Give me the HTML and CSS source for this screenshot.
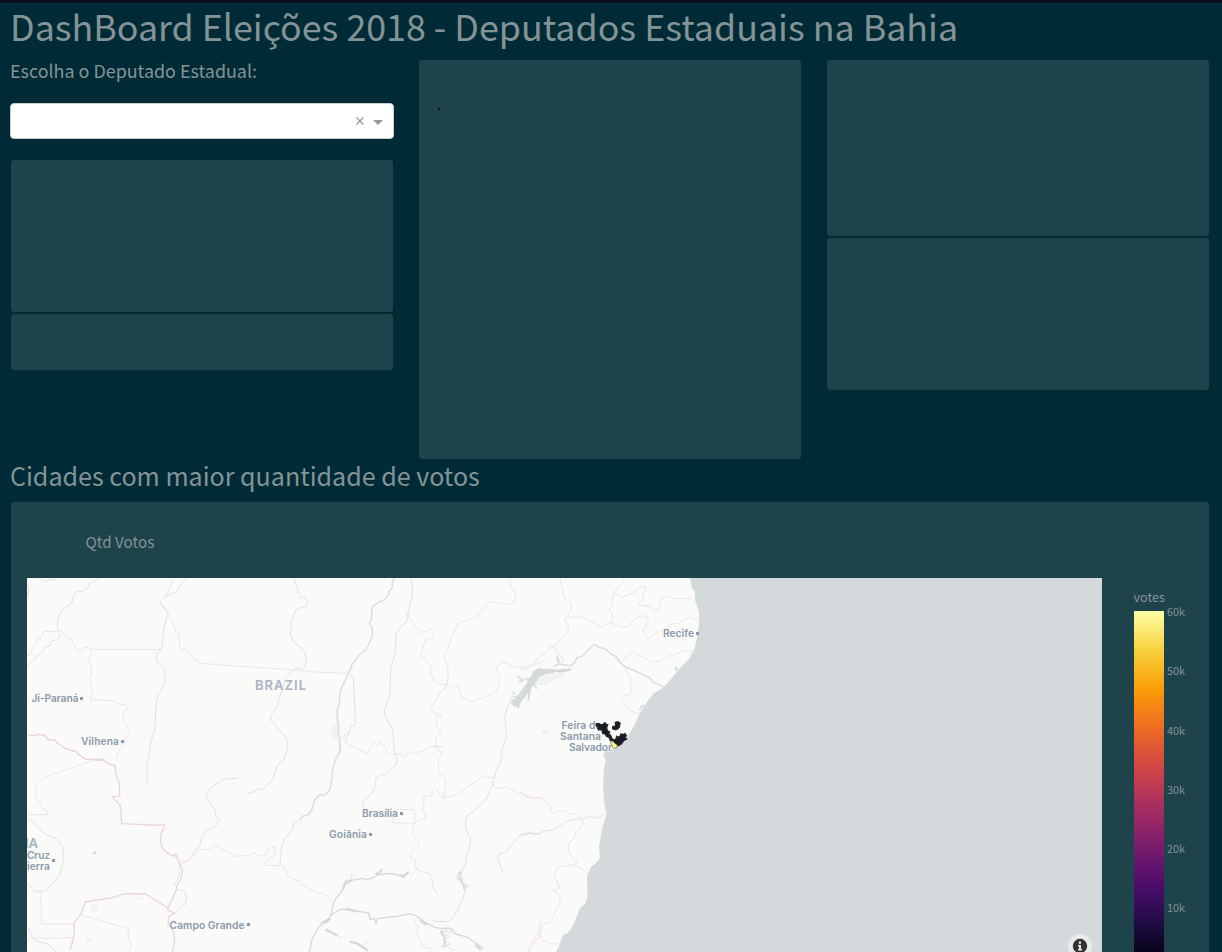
FILE: index.html
```html
<!DOCTYPE html>
<html lang="pt-BR">
<head>
<meta charset="utf-8">
<title>DashBoard Eleições 2018</title>
<link rel="stylesheet" href="styles.css">
</head>
<body>
<main class="page">
  <h1 class="title"><span>DashBoard Eleições 2018 - Deputados Estaduais na Bahia</span></h1>
  <section class="columns">
    <div class="column">
      <label class="picker-label"><span>Escolha o Deputado Estadual:</span></label>
      <div class="select">
        <svg class="select-icons" width="30" height="12" viewBox="0 0 30 12"><path d="M1.500 2.500l6.800 7M8.300 2.500L1.500 9.500" stroke="#999" stroke-width="1.200" fill="none"/><path d="M18 5h10l-5 5z" fill="#999"/></svg>
      </div>
      <div class="card card-candidate"></div>
      <div class="card card-summary"></div>
    </div>
    <div class="column"><div class="card card-photo"><i class="dot"></i></div></div>
    <div class="column">
      <div class="card card-party"></div>
      <div class="card card-total"></div>
    </div>
  </section>
  <h2 class="subtitle"><span>Cidades com maior quantidade de votos</span></h2>
  <section class="card map-card">
    <div class="chart-title"><span>Qtd Votos</span></div>
    <div class="chart">
      <svg class="map" width="1075" height="374" viewBox="27 578 1075 374">
        <rect x="27" y="578" width="1075" height="374" fill="#d4dadc"/>
        <path fill="#fafaf8" d="M27 578H690L692 588 695 592 695 600 699 612 699 624 697 638 694 650 689 659 680 668 671 679 663 688 654 693 647 702 640 713 634 726 627 737 621 745 614 749 606 750 603 756 606 760 604 768 603 786 604 802 606.500 814 602 829 599 847 600 858 596 863 591 867 587 876 587.500 897 585 904 580 908 576 918 574 924 568 933 563 935 559 946 556 952H27z"/>
        <g class="shade">
          <path d="M152 283l1-7 4 3v27l-4-2zM93 490l9-34 7 10 4 44-14-5z" transform="translate(300 570) scale(.33333)"/>
          <path d="M45 328l26-12 32-4 27-7-4 16-28 9-18 15-32-1zM62 476l20 4 7 16-23-4z" transform="translate(520 570) scale(.33333)"/>
          <path d="M212 436l17-5 6 16-22 10zM198 536l13-6 4 14-12 5zM346 412l27 2-6 6-19-2z" transform="translate(20 760) scale(.33333)"/>
        </g>
        <g class="river">
          <g transform="translate(20 570) scale(.33333)">
            <path d="M55 24l18 10 28-7 12 4M22 42l5 20-4 22M238 24l-29 16-9 19-12 3-3 3-16-2-10 18-3 17-19 15-8 5-15 28-2 28 9 27-9 8-19 6-4 14-12 2-16 22-8 2-10 14-23 20M502 24l-16 12-15 30-19 7-20 10M446 136l-5-14-20-24M442 136l-5 20-6 20-2 34-2 20-6 10-8 8-4 12 2 16 14 12 9 10 2 30-8 26-14 18-4 20-3 26-2 58-13 40-3 27-4 28M820 24l12 24 2 18 8 10M842 112l-14 8-14 32-3 38 10 28 20 13M840 293l-16 2-11 10-16 20-10 37-11 24-2 23-20 25-2 16 26 30 18 22 8 18-3 22-14 38"/>
          </g>
          <g transform="translate(20 760) scale(.33333)">
            <path d="M382 0l-1 68M786 0l-14 18-13 39-30 31-12-1-18 10-15 3M652 55l-38 2-40 25-13 15-5 13 14 14 4 12 14 18-2 13 11 14-8 15-28 15-15 20-7 28-15 16-10 18-15 12-18 5-4 36-8 18-8 15M474 390l20 3 7 22-7 20-15 9-15 18-17 5M22 175l25 20 20 22 43 20 20 25-1 48-11 38-28 31-15 14-31 2-22-24M22 500l14 27 12 16 35 9 27 24M840 178l-19 15-2 14-24 29-10 20-6 63"/>
            <path class="lake" d="M216 280l12 0M222 278l6-3M464 280l8 9"/>
          </g>
          <g transform="translate(300 570) scale(.33333)">
            <path d="M332 24l6 26-2 30-11 46-1 18-7 14-16 14-13 20-2 56-14 45-2 77-12 38-6 9 3 18 23 46 3 42 2 17 8 30M0 82l11-1 12 15-5 14-18 3M0 230l13 16 6 25-7 23-12 8M150 310l10 16 4 66 3 70-14 8-5 16-12 8-8 14M636 382l-13 28-9 31 5 40-1 30-12 24-3 35"/>
            <path class="bold" d="M283 24l-7 15 2 12-12 15 1 7-14 16-18 8-16 12-4 6v32l-7 13 3 8 6 4v24l-10 26-10 18-22 18-20 28-15 37-14 27-6 18-2 34-5 16-1 25 4 16v30l4 14-1 32 5 6M122 519l-4 30-12 21"/>
          </g>
          <g transform="translate(300 760) scale(.33333)">
            <path class="bold" d="M107 0l-8 24-5 40-3 22-13 18-23 2-12 16-5 21-11 20-18 5-9 12"/>
            <path d="M291 0l-3 14-17 17-13 12-19 2-12 10v24l-16 25-23 24 5 24M604 0l-15 30-14 50-18 40-20 20-37 29-4 20 2 20 14 30-5 30-9 25-2 18-10 22-3 13 5 18 8 14-5 30-18 40-17 30-15 6-41-1M720 223l-30-5-28 5-45 54-20 5-4 14 7 18 8 22M346 322l15 12 26 6 8 15 4 25 11 20"/>
            <path class="lake" d="M328 335l-12 10-15 2-22-5-15-2-33 5-17 10-15 3-14-3-10 3-24 3-8 8-8 4-9 20-21 26-6 15-5 24-4 15-22 14-20 28-13 25-4 28-13 24M93 465l24-15 12-3 24 4 30 4 24 4 3 20 13-4 5 15 6-15 56-6 40-8 25 10 20 16 30 15 20 4 23-2 20 18 36 10 12 10 15 10 20 13"/>
            <path class="lake-wide" d="M325 335l-9 11-9 3-8-4M247 328l-11 11-9 4M155 362l-18 4-6 15-4 5M90 475l-8 10-16 3M77 509l36 18M138 446l36 9M150 545l21 5 15 10 19 12M360 481l20 14M422 512l13 24-2 26M526 555l18 14M475 346l8-12M476 352l16 24 1 12"/>
            <path d="M466 350l20-2-15 9 19 1-10 8 20 8-8 7 16-4-15 9 8 9M421 513l20-4-14 15 22 4-20 12 24 12-30 8M438 510l12 12 6-18 8 10M155 341v21M141 355l4 16-14-1M240 333l10-4M65 487l5 8M107 521l18 15M187 559l18-17M302 340l-4 10 18 4M430 552l33 20"/>
          </g>
          <g transform="translate(520 570) scale(.33333)">
            <path class="bold" d="M118 282l35 5 13-12 4-12 17-4 14-15 22-21 15 10 15 2 18 15 16 9 12 17 10 10 40 19 40 18 10 13 20 9 12 7"/>
            <path class="lake" d="M16 322l11 14 20 8M24 328l4 22-3 39M102 290l8-6 8-2-2-12-5-12 1 18M472 302l-8-8 6 2v-6M358 420l10-12 8-2M366 412l-6-4"/>
          </g>
          <path d="M0 228l30-7 20 2 20-9 30-5 18-10 12-10 20-8 40-7 25-4 20 5 12-10 12-5" transform="translate(520 760) scale(.33333)"/>
        </g>
        <g fill="#d4dadc" stroke="#d4dadc" stroke-width="1" transform="translate(300 570) scale(.33333)">
          <path d="M640 408l-2-6-8-4 8-4-2-6 8 0 2-8 12-8 12-18 12-14 1-12 12-10 6-14 14-10 14 4 22-2 20 4 16-3 18 0 6-6 2 10-22 6-24-1-8 3-22 3-20 9-8 14-10 10-8 16-10 12-14 18-8 10-2 14-6-4z"/>
          <path fill="none" stroke-width="4" d="M651 318l14 12 10-1M655 334l14 0M634 376l8 5M638 366l8 6M676 344l14 22-6 28M692 334l20 22M640 398l10 8"/>
        </g>
        <g class="border">
          <g transform="translate(20 570) scale(.33333)">
            <path d="M462 24l-20 49-20 21v10l20 24 1 12 14 12 10 32 10 6 2 40 3 8 17 3 5 8 13 8 5 15 10-1 8 9 110 8 190 13M122 184H70l-6 20-17 3 2 14-12 15-5 17-10 2M122 184l15 15 4 6 14 2 3 12 8 10 5 13 16 2 6-11 9-1 9 6H424M216 243l-7 20-4 14 9 12 1 14-6 24 8 28-6 34 74 3 8 9 25 4 2 16-11 12v19l10 11 1 13 11 12-13 17-8 16-10 16-12 28"/>
            <path class="nation" d="M22 495l20 1 17-3 13 3 15 14 17-1 9 11 13 8 8 7 10 3 13 5h10l5 8 18 12 6 5h57"/>
          </g>
          <g transform="translate(20 760) scale(.33333)">
            <path class="nation" d="M220 0h30l14 11 22 7 1 23 11 32 1 36-22 1 24 27 4 54 116 5 12-4 1 9-11 20-2 26 7 20 23 18 17 3 20 42-6 29-12 18v11l-26 56-67-42-61-1-40 12-80 13-14 37-20 26v39l-12 43"/>
            <path class="nation" d="M441 448l22 12-17 11-2 22 16 22 4 19-6 42"/>
            <path d="M220 0L74 52 47 82l2 32 10 12 10 20 15 9v9H22M62 395l3 97h98M186 466l140 40-2 24 10 26-7 20M22 544l14-15 1 6 125-2M470 285l18 21 16-2 36-35 25-1 20-11 32 15 31 17 37-3 20-8 10 9 22 1 4-15 10-10 15-2-2 26-14 3-16 18 3 8 52 2 2 11 14 8-7 8 20 9 7 6 19 5"/>
          </g>
          <g transform="translate(300 570) scale(.33333)">
            <path d="M631 24v22l18 25-8 27-20 5-20-2-15-5-17 1-30 30-10 15-24 7-30 10-9 15-6 20-10 20-6 24-12 17 1 13 10 20 2 30-7 30-3 11M330 131l-15-3 13 16 10 11 23 33 13-4 20-6 8 16-7 11-18 4-6 16-4 18-6 13 14 8 4 11 16 16-4 18 11 24 14 8 28 4 8 12 14-11 10 7 8 29 35 14 8-8 20-4 10-6 16-2 14-13 10-17-1-17 7-7-9-10-4-21 16-14 16 1 14 11 14-1 17 13 15-5 15-13 18-3 17-10M440 343l-5 12-14 11-16 28-14 18 9 18 26 5-17 8v24l14 13-14 20v38l20 14-15 18M0 302l40 4 107 4M110 410v40l5 68 8 2M150 484l-12 22v14l65 32 3-13 15-20 12 6 8-7 18 18 1 12 16 6 20-2 22 9 5-20 12 10 34-8 21-14 45 2"/>
          </g>
          <g transform="translate(300 760) scale(.33333)">
            <path d="M415 0v38l18 14 5 12-6 54-18-22-9-13-8 8-3 18-21-1-4 15 4 14-4 12 6 15 2 12-16 4-15 5-10 7-4-2-54-2 4-39h58l5 10-1 28-8 30 22 36-3 9-24 17 2 16 14 6v19l3 9-10 12-8 2M432 112l23-2 26-11 30-24 40-25 30 4-1 24 20 7 20-3 35 16 30 15 35 3M0 376l12 1 18 12 50 17 16 13M343 475l2 18 10 9-7 20 12 16 6 24 23 2 8 12M686 576l6-26 14-20 11-15 3-33"/>
          </g>
          <g transform="translate(520 570) scale(.33333)">
            <path d="M120 24l8 38 10 28 16 8-2 24-8 14-9 14 11 22-2 15-39 39-16 6-10 16-22 13-17 24-30 8H0M144 140l18 2 28-1 20 12 35 20 18-11 14-4-1-28-8-10 8-12 4-36 12-18 14-14 7-16M284 70l20 12 20-6 20-10 14-12 18-5 2 14-10 12 2 12-11 8-3 10 14 4 18-3 18 18 15-9-3-14 17-24 30 9 50-1M276 160l25 11 24-1 15-20 28-14 18 10-8 19-1 12-11 6 10 8 7 15 15-9 10-10 21-2 15-13 10-10 25-2 10-10 20-8 23 10M94 236l8-6 12 20 16 20-2 12M304 278l14-16 20-18 12 7 12 9 20 7 12 11 28-5 20-13 20-6 35-13 33 7M316 286l4 18 10 19 4 23-3 28-20 2-9 9 20 30 25 15h12"/>
          </g>
          <g transform="translate(520 760) scale(.33333)">
            <path d="M0 97l15 6 8 6 15 2 5 5 15-5 10 4 10 14 14 9v16l12 4 5-4 9-2 22 3 16 9 9-3 11 10 7 9 7 2-2 10-21 27-5 18-12 7-6 13 2 21 14 17 11 8-5 13-25-1-5 6-12-5-16 13-6 20 10 10v17l7 1-1 10-20 2 12 8 10 15v22l-12 16-10 22-8 16-23 3-4 15-2 25-18 10-6 20-8 4-5 27M164 314l40 26M55 516l10 15v10l23 7 14 4h12"/>
          </g>
        </g>
        <g class="labels">
          <text x="255" y="689.500" textLength="51" class="country">BRAZIL</text>
          <text x="25" y="848" class="country">IA</text>
          <text x="31.500" y="702" textLength="47">Ji-Paraná</text>
          <text x="81" y="745" textLength="38">Vilhena</text>
          <text x="27" y="859" textLength="23">Cruz</text>
          <text x="27" y="869.500" textLength="23">ierra</text>
          <text x="169.500" y="929" textLength="75">Campo Grande</text>
          <text x="362" y="817" textLength="36">Brasília</text>
          <text x="329" y="838" textLength="38">Goiânia</text>
          <text x="663" y="637" textLength="31">Recife</text>
          <text x="561.500" y="729" textLength="40">Feira de</text>
          <text x="560" y="739.500" textLength="41">Santana</text>
          <text x="569" y="751" textLength="43">Salvador</text>
          <path d="M80 697h3v3h-3zM121 740h3v3h-3zM52 859h3v3h-3zM247 923h3v3h-3zM400 812h3v3h-3zM369 833h3v3h-3zM696 632h3v3h-3z"/>
        </g>
        <g transform="translate(550 700) scale(.33333)">
          <path d="M139 71h9l3 4 6-1 8-6 4 6 4 0-3 9 2 9 7 4-3 6 6 4 3 9 5 4h7l3-10 4 3 8-5v-5l9 1 4-2 4 6-4 5 5 5-9 5-7 10-11 6-8-4-6-11-8-2-4-9-8-3-3-7-8-2-2-9-7-3-3 2-3-5 3-4-6-2-2-6zM196 67l8-2 6 4v5l-3 2 2 4-5 6-7 3-9-3v-6l9-2z" fill="#18191d" stroke="#26292d" stroke-width="4"/>
          <path d="M181 126l7-3 8 8 7 5-5 9-9-1z" fill="#faf68d" stroke="#34363a" stroke-width="1.500"/>
          <path d="M207 124l12-9 2 7-8 5z" fill="#25105a"/>
        </g>
        <circle cx="1080" cy="946" r="12" fill="#e8eaeb"/><circle cx="1080" cy="946" r="7.200" fill="#333"/>
        <path d="M1078 945h3v4h1v1.500h-4V949h1v-2.500h-1zM1078.800 941.500h2.200v2.200h-2.200z" fill="#e8eaeb"/>
      </svg>
      <div class="legend">
        <div class="legend-title">votes</div>
        <div class="scale">
          <div class="gradient"></div>
          <div class="ticks"><span>60k</span><span>50k</span><span>40k</span><span>30k</span><span>20k</span><span>10k</span></div>
        </div>
      </div>
    </div>
  </section>
</main>
</body>
</html>
```
FILE: styles.css
```css
* { box-sizing: border-box; }
html, body { margin: 0; height: 100%; overflow: hidden; }
body { background: #002b36; color: #839496; font-family: "Noto Sans CJK SC", "Noto Sans", sans-serif; }
.page { height: 952px; overflow: hidden; border-top: 3px solid #0d0b1e; padding: 0 13px 0 11px; }
.title, .subtitle { margin: 0; font-weight: 400; white-space: nowrap; }
.title { height: 57px; margin-left: -1px; font-size: 35.8px; line-height: 44px; }
.columns { display: grid; grid-template-columns: repeat(3, 382px); column-gap: 26px; height: 399px; }
.picker-label { display: block; height: 43px; margin-left: -1px; font-size: 17.92px; line-height: 20px; }
.select { display: flex; align-items: center; justify-content: flex-end; width: 384px; height: 36px; margin: 0 0 21px -1px; padding-right: 8px; background: #fff; border: 1px solid #ccc; border-radius: 4px; }
.card { background: #1f434b; border-radius: 3px; }
.card-candidate { height: 152px; margin-bottom: 2px; }
.card-summary { height: 56px; }
.card-photo { height: 399px; padding: 48px 19px; }
.dot { display: block; width: 2px; height: 2px; background: #071014; }
.card-party { height: 176px; margin-bottom: 2px; }
.card-total { height: 152px; }
.subtitle { height: 43px; margin-left: -1px; font-size: 25.06px; line-height: 32px; }
.map-card { height: 470px; padding: 0 16px; }
.chart-title { height: 76px; padding-left: 58.5px; font-size: 15.2px; line-height: 78px; }
.chart { display: flex; gap: 32px; }
.map { display: block; flex: none; }
.legend { padding-top: 9px; }
.legend-title { height: 24px; margin-left: -0.5px; font-size: 12.6px; line-height: 20px; }
.scale { display: flex; gap: 3px; }
.gradient { width: 30px; height: 356px; background: linear-gradient(#fcffa4 0, #f7d13d 39.500px, #fb9b06 79px, #ed6925 118.500px, #cf4446 158px, #a52c60 197.500px, #781c6d 237px, #4a0c6b 276.500px, #1b0c41 316px, #000004 355px); }
.ticks { display: flex; flex-direction: column; margin-top: -9px; font-size: 10.8px; }
.ticks span { height: 59.3px; line-height: 18px; }
.river { fill: none; stroke: #dbe4e5; stroke-width: 3; stroke-linejoin: round; }
.bold { stroke: #d7dcde; stroke-width: 4; }
.lake { stroke: #d4dadc; stroke-width: 4; }
.lake-wide { stroke: #d4dadc; stroke-width: 7; }
.shade { fill: #f2f2f1; }
.border { fill: none; stroke: #f1e3e4; stroke-width: 3; stroke-linejoin: round; }
.nation { stroke: #ebd5d8; stroke-width: 4; }
.labels { fill: #8c9baa; font: 600 10.3px "Inter", "Open Sans", sans-serif; }
.country { fill: #a9b4bf; font-size: 13px; }
.labels text { stroke: #fafaf8; stroke-width: 1px; paint-order: stroke; }
```
